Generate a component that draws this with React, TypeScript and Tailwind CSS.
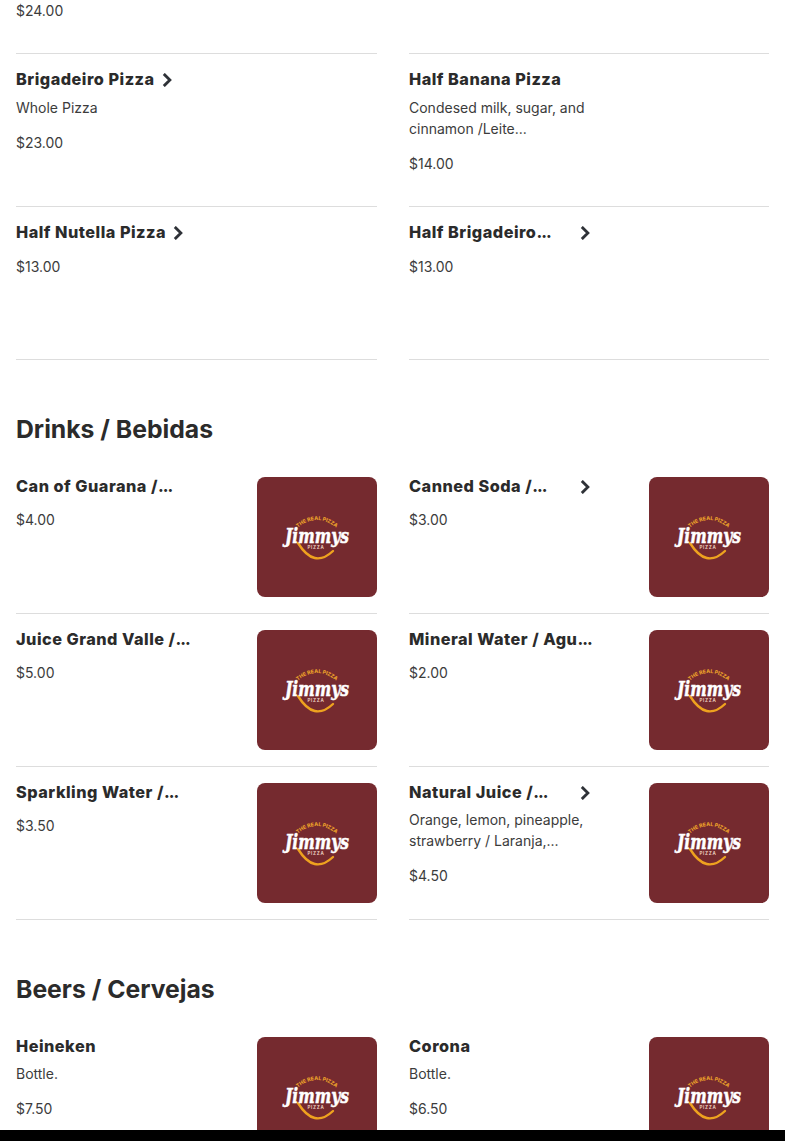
const Logo = () => {
  return (
    <div className="w-[120px] h-[120px] shrink-0 rounded-lg bg-[#752a2f] overflow-hidden">
      <svg viewBox="0 0 120 120" className="w-full h-full">
        <defs>
          <path id="topArc" d="M36 55 Q60 31 84 55" fill="none" />
        </defs>
        <text fontSize="5.2" fontWeight="800" fontFamily="Inter, sans-serif" fill="#eaa02a" textAnchor="middle">
          <textPath href="#topArc" startOffset="50%">THE REAL PIZZA</textPath>
        </text>
        <path d="M41 66 Q57 92 76 74" fill="none" stroke="#eea21f" strokeWidth="2.4" strokeLinecap="round" />
        <text x="60" y="66" fontSize="20" fontWeight="700" fontStyle="italic" fontFamily="'DejaVu Serif', serif" fill="#ffffff" stroke="#ffffff" strokeWidth="0.5" textAnchor="middle" textLength="64" lengthAdjust="spacingAndGlyphs">Jimmys</text>
        <text x="59" y="71.5" fontSize="4.6" fontWeight="600" fontFamily="Inter, sans-serif" fill="#f3d9c8" letterSpacing="0.7" textAnchor="middle">PIZZA</text>
      </svg>
    </div>
  )
}

const Chevron = () => {
  return (
    <svg viewBox="0 0 10 14" className="w-[10px] h-[14px] shrink-0 text-[#2f3238]">
      <path d="M1.8 0.9 L7.9 7 L1.8 13.1" fill="none" stroke="currentColor" strokeWidth="2.8" />
    </svg>
  )
}

type Item = {
  name: string
  price: string
  desc?: string
  chevron?: "inline" | "end"
  img?: boolean
}

const Card = ({ item, loose }: { item: Item; loose?: boolean }) => {
  const cut = item.name.endsWith("...")
  return (
    <div className="flex justify-between border-b border-[#dddddd] pt-4 pb-4 h-[153px]">
      <div>
        <div className="flex items-center h-[19px]">
          <h3 className={`text-[16.25px] leading-[19px] font-extrabold tracking-[0.5px] text-[#2b2b2b] whitespace-nowrap ${item.chevron === "end" ? "w-[171px]" : ""}`}>
            {cut ? item.name.slice(0, -3) : item.name}
            {cut && <span className="tracking-[-1px]">...</span>}
          </h3>
          {item.chevron === "inline" && <span className="ml-[7px] flex"><Chevron /></span>}
          {item.chevron === "end" && <Chevron />}
        </div>
        <div className={loose ? "mt-2" : "mt-[7px]"}>
          {item.desc && (
            <p className="mb-[14px] text-[14px] leading-[21px] text-[#3c3c3c] whitespace-pre-line">{item.desc}</p>
          )}
          <p className={`text-[14px] leading-[21px] text-[#3c3c3c] ${item.desc ? "" : "pt-[6px]"}`}>{item.price}</p>
        </div>
      </div>
      {item.img && <Logo />}
    </div>
  )
}

const Section = ({ title, items }: { title: string; items: Item[] }) => {
  return (
    <section>
      <h2 className="pt-[51px] pb-[14px] text-[24.75px] leading-9 font-bold text-[#2b2b2b]">{title}</h2>
      <div className="grid grid-cols-[361px_360px] gap-x-8">
        {items.map((item) => (
          <Card key={item.name} item={item} />
        ))}
      </div>
    </section>
  )
}

const pizzas: Item[] = [
  { name: "Brigadeiro Pizza", desc: "Whole Pizza", price: "$23.00", chevron: "inline" },
  { name: "Half Banana Pizza", desc: "Condesed milk, sugar, and\ncinnamon /Leite...", price: "$14.00" },
  { name: "Half Nutella Pizza", price: "$13.00", chevron: "inline" },
  { name: "Half Brigadeiro...", price: "$13.00", chevron: "end" },
]

const drinks: Item[] = [
  { name: "Can of Guarana /...", price: "$4.00", img: true },
  { name: "Canned Soda /...", price: "$3.00", chevron: "end", img: true },
  { name: "Juice Grand Valle /...", price: "$5.00", img: true },
  { name: "Mineral Water / Agu...", price: "$2.00", img: true },
  { name: "Sparkling Water /...", price: "$3.50", img: true },
  { name: "Natural Juice /...", desc: "Orange, lemon, pineapple,\nstrawberry / Laranja,...", price: "$4.50", chevron: "end", img: true },
]

const beers: Item[] = [
  { name: "Heineken", desc: "Bottle.", price: "$7.50", img: true },
  { name: "Corona", desc: "Bottle.", price: "$6.50", img: true },
]

export default function App() {
  return (
    <div className="h-[1141px] flex flex-col bg-white font-['Inter',sans-serif] overflow-hidden">
      <div className="flex-1 min-h-0 overflow-hidden px-4">
        <div className="grid grid-cols-[361px_360px] gap-x-8">
          <div className="h-[54px] border-b border-[#dddddd] text-[14px] leading-[21px] text-[#3c3c3c]">$24.00</div>
          <div className="h-[54px] border-b border-[#dddddd]" />
        </div>
        <div className="grid grid-cols-[361px_360px] gap-x-8">
          {pizzas.map((item) => (
            <Card key={item.name} item={item} loose />
          ))}
        </div>
        <Section title="Drinks / Bebidas" items={drinks} />
        <Section title="Beers / Cervejas" items={beers} />
      </div>
      <div className="h-[11px] shrink-0 bg-black" />
    </div>
  )
}
